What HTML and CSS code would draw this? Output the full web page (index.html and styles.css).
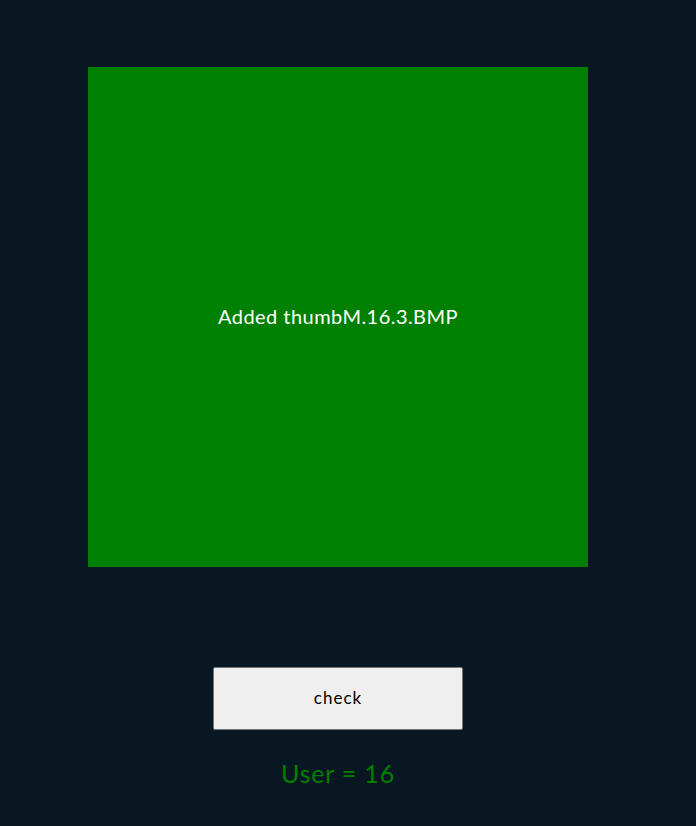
FILE: index.html
```html
<!DOCTYPE html>
<html>
<head>
<meta charset="utf-8">
<link rel="stylesheet" href="styles.css">
</head>
<body>
<main class="page">
  <div class="tile">Added thumbM.16.3.BMP</div>
  <button class="check">check</button>
  <p class="user">User = 16</p>
</main>
</body>
</html>
```
FILE: styles.css
```css
html, body {
  margin: 0;
  padding: 0;
  background: #081721;
  height: 100%;
}
.page {
  width: 676px;
  display: flex;
  flex-direction: column;
  align-items: center;
  padding-top: 67px;
  font-family: "Lato", "Open Sans", sans-serif;
}
.tile {
  width: 500px;
  height: 500px;
  background: #008000;
  color: #ffffff;
  display: flex;
  align-items: center;
  justify-content: center;
  font-size: 20px;
  letter-spacing: 0.45px;
  padding-bottom: 2px;
  box-sizing: border-box;
}
.check {
  margin-top: 100px;
  width: 250px;
  height: 63px;
  background: #efefef;
  border: 1px solid #767676;
  border-radius: 2px;
  font-family: "Lato", "Open Sans", sans-serif;
  font-size: 17px;
  letter-spacing: 1px;
  color: #000000;
  padding: 0 0 2px;
}
.user {
  margin: 27px 0 0;
  color: #008000;
  font-size: 25px;
  letter-spacing: 0.8px;
  line-height: 32px;
}
```
